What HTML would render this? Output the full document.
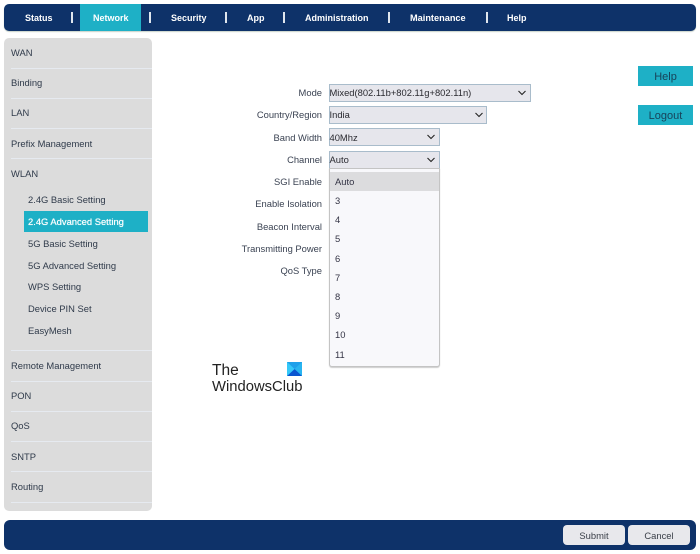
<!DOCTYPE html>
<html><head><meta charset="utf-8">
<style>
html,body{margin:0;padding:0;background:#fff}
#p{position:relative;width:700px;height:554px;overflow:hidden;background:#fff;font-family:"Liberation Sans",sans-serif;font-size:9.4px;color:#333}
#p div{position:absolute;box-sizing:border-box;white-space:nowrap}
.t{transform:translateY(calc(-50% + .2px));line-height:12px;filter:blur(.25px)}
.n{color:#fff;font-weight:bold;top:17.5px;font-size:9px}
.s{width:2px;height:11px;background:#dfe6ee;top:12px}
.l{height:1px;background:#e6eaf0;left:11px;width:141px}
.m{left:11px;color:#2f3a4a}
.u{left:28px;color:#2f3a4a}
.r{right:378px;color:#3a4252}
.sel{background:#e6e6ec;border:1px solid #a9bccb;left:329px;height:18px}
.v{left:329.5px;color:#2a2a30}
.o{left:335px;color:#334}
.btn{background:#1eb0c6;color:#17435a;text-align:center;font-size:11px;left:638px;width:55px;height:20px;line-height:22px;filter:blur(.2px)}
.g{background:#e8e8ec;border-radius:4px;height:20px;top:525px;width:62px;text-align:center;line-height:21px;color:#3a3f48;filter:blur(.2px)}
svg.c{position:absolute}
</style></head><body><div id="p">
<div style="left:4px;top:4px;width:692px;height:27px;background:#0e3269;border-radius:5px;box-shadow:0 1px 1px #c9d2c9"></div>
<div style="left:80px;top:4px;width:61px;height:27px;background:#1eb0c6"></div>
<div class="t n" style="left:25px">Status</div>
<div class="s" style="left:70.5px"></div>
<div class="t n" style="left:93px">Network</div>
<div class="s" style="left:149px"></div>
<div class="t n" style="left:171px">Security</div>
<div class="s" style="left:225px"></div>
<div class="t n" style="left:247px">App</div>
<div class="s" style="left:283px"></div>
<div class="t n" style="left:305px">Administration</div>
<div class="s" style="left:388px"></div>
<div class="t n" style="left:410px;font-size:9.2px">Maintenance</div>
<div class="s" style="left:486px"></div>
<div class="t n" style="left:507px">Help</div>

<div style="left:4px;top:38px;width:148px;height:473px;background:#dcdcdc;border-radius:5px"></div>
<div class="l" style="top:68px"></div><div class="l" style="top:98px"></div><div class="l" style="top:128px"></div><div class="l" style="top:158px"></div>
<div class="l" style="top:350px"></div><div class="l" style="top:381px"></div><div class="l" style="top:411px"></div><div class="l" style="top:441px"></div><div class="l" style="top:471px"></div><div class="l" style="top:502px"></div>
<div class="t m" style="top:53px">WAN</div>
<div class="t m" style="top:83px">Binding</div>
<div class="t m" style="top:113px">LAN</div>
<div class="t m" style="top:143.5px">Prefix Management</div>
<div class="t m" style="top:174px">WLAN</div>
<div class="t u" style="top:200px">2.4G Basic Setting</div>
<div style="left:24px;top:211px;width:124px;height:21px;background:#1eb0c6"></div>
<div class="t u" style="top:222px;color:#fff;text-shadow:0 0 .6px #fff">2.4G Advanced Setting</div>
<div class="t u" style="top:244px">5G Basic Setting</div>
<div class="t u" style="top:266px">5G Advanced Setting</div>
<div class="t u" style="top:287px">WPS Setting</div>
<div class="t u" style="top:309px">Device PIN Set</div>
<div class="t u" style="top:331px">EasyMesh</div>
<div class="t m" style="top:366px">Remote Management</div>
<div class="t m" style="top:396px">PON</div>
<div class="t m" style="top:426px">QoS</div>
<div class="t m" style="top:457px">SNTP</div>
<div class="t m" style="top:487px">Routing</div>

<div class="t r" style="top:93px">Mode</div>
<div class="t r" style="top:115px">Country/Region</div>
<div class="t r" style="top:137.5px">Band Width</div>
<div class="t r" style="top:159.5px">Channel</div>
<div class="t r" style="top:182px">SGI Enable</div>
<div class="t r" style="top:204px">Enable Isolation</div>
<div class="t r" style="top:226.5px">Beacon Interval</div>
<div class="t r" style="top:248.5px">Transmitting Power</div>
<div class="t r" style="top:271px">QoS Type</div>

<div class="sel" style="top:84px;width:202px"></div>
<div class="t v" style="top:93px">Mixed(802.11b+802.11g+802.11n)</div>
<svg class="c" style="left:517px;top:90px" width="10" height="6" viewBox="0 0 10 6"><path d="M1.500 1L5 4.500L8.500 1" fill="none" stroke="#222" stroke-width="1.100"/></svg>
<div class="sel" style="top:106px;width:158px"></div>
<div class="t v" style="top:115px">India</div>
<svg class="c" style="left:474px;top:112px" width="10" height="6" viewBox="0 0 10 6"><path d="M1.500 1L5 4.500L8.500 1" fill="none" stroke="#222" stroke-width="1.100"/></svg>
<div class="sel" style="top:128px;width:111px"></div>
<div class="t v" style="top:137.500px">40Mhz</div>
<svg class="c" style="left:426px;top:134px" width="10" height="6" viewBox="0 0 10 6"><path d="M1.500 1L5 4.500L8.500 1" fill="none" stroke="#222" stroke-width="1.100"/></svg>
<div class="sel" style="top:151px;width:111px"></div>
<div class="t v" style="top:160px">Auto</div>
<svg class="c" style="left:426px;top:157px" width="10" height="6" viewBox="0 0 10 6"><path d="M1.500 1L5 4.500L8.500 1" fill="none" stroke="#222" stroke-width="1.100"/></svg>

<div style="left:329px;top:168px;width:111px;height:199px;background:#f8f8fb;border:1px solid #c4c4c4;border-radius:0 0 3px 3px;box-shadow:0 1px 1px #ccc"></div>
<div style="left:330px;top:172px;width:109px;height:19px;background:#dcdcde"></div>
<div class="t o" style="top:181.5px">Auto</div>
<div class="t o" style="top:200.5px">3</div>
<div class="t o" style="top:220px">4</div>
<div class="t o" style="top:239px">5</div>
<div class="t o" style="top:258.5px">6</div>
<div class="t o" style="top:277.5px">7</div>
<div class="t o" style="top:297px">8</div>
<div class="t o" style="top:316px">9</div>
<div class="t o" style="top:335px">10</div>
<div class="t o" style="top:354.5px">11</div>

<div class="btn" style="top:66px">Help</div>
<div class="btn" style="top:105px">Logout</div>

<div class="t" style="left:212px;top:371px;font-size:15.5px;line-height:18px;color:#222;filter:none">The</div>
<div class="t" style="left:212px;top:386.5px;font-size:14.8px;line-height:18px;color:#222;filter:none">WindowsClub</div>
<svg class="c" style="left:287px;top:362px" width="15" height="14" viewBox="0 0 15 14"><rect width="15" height="14" fill="#28b4f0"/><path d="M0 0L7.500 7L15 0z" fill="#1ea0ea"/><path d="M0 14L7.500 7L15 14z" fill="#0a55d0"/><path d="M0 0L7.500 7L0 14z" fill="#35c8f8"/></svg>

<div style="left:4px;top:520px;width:692px;height:30px;background:#0e3269;border-radius:6px"></div>
<div class="g" style="left:563px">Submit</div>
<div class="g" style="left:628px">Cancel</div>
</div></body></html>
